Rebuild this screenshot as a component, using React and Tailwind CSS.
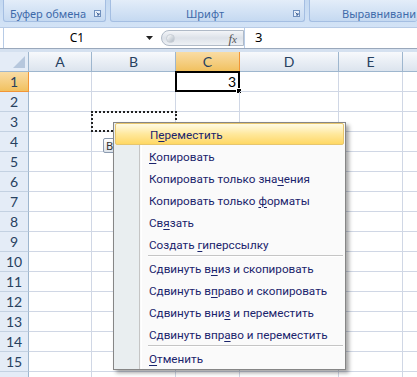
import React from "react";

const COLS = [
  { k: "A", w: "w-[63px]" },
  { k: "B", w: "w-[84px]" },
  { k: "C", w: "w-[64px]" },
  { k: "D", w: "w-[99px]" },
  { k: "E", w: "w-[64px]" },
  { k: "F", w: "w-[40px]" },
];

function Launcher() {
  return (
    <svg width="7" height="7" viewBox="0 0 7 7" className="shrink-0">
      <rect x="0.5" y="0.5" width="6" height="6" fill="#e8f0fa" stroke="#6f8fbd" />
      <path d="M2.5 2.5 L5 5 M5 3 V5 H3" stroke="#3b5f95" strokeWidth="1" fill="none" />
    </svg>
  );
}

function Item({ pre, u, post, active }) {
  return (
    <div
      className={
        "h-[22px] flex items-center pt-[3px] pl-[34px] mx-[1px] rounded-[2px] " +
        (active
          ? "border border-[#e7c66e] bg-gradient-to-b from-[#fffbe4] via-[#ffe89c] to-[#ffd863] pl-[33px]"
          : "")
      }
    >
      <span className="font-['Roboto',sans-serif] text-[11.7px] leading-none text-[#1a246c] whitespace-nowrap">
        {pre}
        <span className="underline underline-offset-2">{u}</span>
        {post}
      </span>
    </div>
  );
}

function Sep() {
  return <div className="ml-[34px] mr-[2px] h-[2px] border-t border-[#c5c5c5] border-b border-b-white" />;
}

export default function App() {
  const rows = Array.from({ length: 16 }, (_, i) => i + 1);
  return (
    <div className="relative w-[417px] h-[377px] overflow-hidden bg-white font-['Noto_Sans',sans-serif]">
      {/* Ribbon */}
      <div className="h-[27px] bg-gradient-to-b from-[#c4d9f1] to-[#d3e3f6] flex items-start pl-[3px] gap-[4px]">
        <div className="w-[103px] h-[22px] rounded-b-[3px] border-x border-b border-[#a4bee2] bg-gradient-to-b from-[#e3edf9] to-[#c5d9f1] flex items-end">
          <div className="h-[15px] w-full flex items-center pl-[6px] pr-[4px] justify-between">
            <span className="text-[11px] leading-none text-[#3e6aaa] whitespace-nowrap">Буфер обмена</span>
            <Launcher />
          </div>
        </div>
        <div className="w-[195px] h-[22px] rounded-b-[3px] border-x border-b border-[#a4bee2] bg-gradient-to-b from-[#e3edf9] to-[#c5d9f1] flex items-end">
          <div className="h-[15px] w-full flex items-center pr-[4px]">
            <span className="flex-1 text-center pl-[6px] text-[11px] leading-none text-[#3e6aaa]">Шрифт</span>
            <Launcher />
          </div>
        </div>
        <div className="flex-1 h-[22px] rounded-b-[3px] border-l border-b border-[#a4bee2] bg-gradient-to-b from-[#e3edf9] to-[#c5d9f1] flex items-end overflow-hidden">
          <div className="h-[15px] w-full flex items-center pl-[32px]">
            <span className="text-[11px] leading-none text-[#3e6aaa] whitespace-nowrap">Выравнивани</span>
          </div>
        </div>
      </div>

      {/* Formula bar */}
      <div className="h-[22px] flex bg-white border-t border-[#b7cbe6] border-b border-b-[#9aa8bb] pl-[3px]">
        <div className="w-[155px] flex items-center bg-white border-l border-[#b7cbe6]">
          <span className="flex-1 text-center text-[12px] text-black pl-[4px]">C1</span>
          <svg width="7" height="4" viewBox="0 0 7 4" className="mr-[5px]">
            <path d="M0 0 H7 L3.5 4 Z" fill="#222" />
          </svg>
        </div>
        <div className="w-[83px] my-[2px] ml-[3px] rounded-l-full bg-gradient-to-b from-[#f3f5f8] via-[#dde2e9] to-[#eef1f5] border border-[#b0bac7] flex items-center justify-between pl-[4px] pr-[6px]">
          <div className="w-[9px] h-[9px] rounded-full bg-gradient-to-br from-[#ffffff] to-[#aeb8c3] border border-[#c8ced6]" />
          <span className="font-['Liberation_Serif',serif] italic text-[13px] text-[#555] leading-none">
            f<span className="text-[11px]">x</span>
          </span>
        </div>
        <div className="flex-1 flex items-center pl-[10px] border-l border-[#b7cbe6]">
          <span className="text-[13px] text-black">3</span>
        </div>
      </div>
      <div className="h-[3px] bg-[#d5e1f0]" />

      {/* Grid */}
      <div className="font-['Lato',sans-serif]">
        <div className="flex h-[20px]">
          <div className="w-[29px] shrink-0 border-r border-b border-[#9eb6ce] bg-[#e4ecf7] relative">
            <svg width="12" height="12" viewBox="0 0 12 12" className="absolute right-[3px] bottom-[3px]">
              <path d="M12 0 V12 H0 Z" fill="#b6c7dd" />
            </svg>
          </div>
          {COLS.map((c) => (
            <div
              key={c.k}
              className={
                c.w +
                " shrink-0 flex items-center justify-center text-[14px] text-[#27415f] border-r border-b " +
                (c.k === "C"
                  ? "border-[#f29536] bg-gradient-to-b from-[#f9dca4] to-[#f1c15e]"
                  : "border-[#9eb6ce] bg-gradient-to-b from-[#f7f9fc] to-[#dce4ee]")
              }
            >
              {c.k}
            </div>
          ))}
        </div>
        {rows.map((r) => (
          <div key={r} className="flex h-[20px]">
            <div
              className={
                "w-[29px] shrink-0 flex items-center justify-center text-[14px] text-[#27415f] border-r border-b " +
                (r === 1
                  ? "border-[#f29536] bg-gradient-to-b from-[#f9dca4] to-[#f1c15e]"
                  : "border-r-[#9eb6ce] border-b-[#c3d1e2] bg-[#e4ecf7]")
              }
            >
              {r}
            </div>
            {COLS.map((c) => (
              <div key={c.k} className={c.w + " shrink-0 relative border-r border-b border-[#d0d7e5]"}>
                {r === 1 && c.k === "C" && (
                  <div className="absolute -left-[1px] -top-[1px] w-[65px] h-[21px] border-2 border-black flex items-center justify-end pr-[2px]">
                    <span className="text-[14px] text-black leading-none">3</span>
                    <div className="absolute -right-[4px] -bottom-[4px] w-[6px] h-[6px] bg-black border border-white" />
                  </div>
                )}
                {r === 3 && c.k === "B" && (
                  <div className="absolute -left-[1px] -top-[1px] w-[86px] h-[21px] border-2 border-dotted border-[#222]" />
                )}
              </div>
            ))}
          </div>
        ))}
      </div>

      {/* Paste tooltip behind menu */}
      <div className="absolute left-[103px] top-[138px] w-[14px] h-[15px] border border-[#8c9bb0] rounded-[2px] bg-gradient-to-b from-white to-[#dde3ea] flex items-center pl-[2px]">
        <span className="text-[11px] leading-none text-[#333]">В</span>
      </div>

      {/* Context menu */}
      <div className="absolute left-[113px] top-[122px] w-[233px] border border-[#868686] bg-[#fafafa] shadow-[3px_3px_4px_rgba(0,0,0,0.35)]">
        <div className="absolute left-0 top-0 bottom-0 w-[26px] bg-[#e9eef0] border-r border-[#c5c5c5]" />
        <div className="absolute left-[27px] top-0 bottom-0 w-[1px] bg-white" />
        <div className="relative">
          <Item pre="П" u="е" post="реместить" active />
          <Item pre="" u="К" post="опировать" />
          <Item pre="Копировать только зна" u="ч" post="ения" />
          <Item pre="Копировать только " u="ф" post="орматы" />
          <Item pre="Св" u="я" post="зать" />
          <Item pre="Создать " u="г" post="иперссылку" />
          <Sep />
          <Item pre="Сдвинуть в" u="н" post="из и скопировать" />
          <Item pre="Сдвинуть в" u="п" post="раво и скопировать" />
          <Item pre="Сдвинуть вни" u="з" post=" и переместить" />
          <Item pre="Сдвинуть впр" u="а" post="во и переместить" />
          <Sep />
          <Item pre="" u="О" post="тменить" />
        </div>
      </div>
    </div>
  );
}
